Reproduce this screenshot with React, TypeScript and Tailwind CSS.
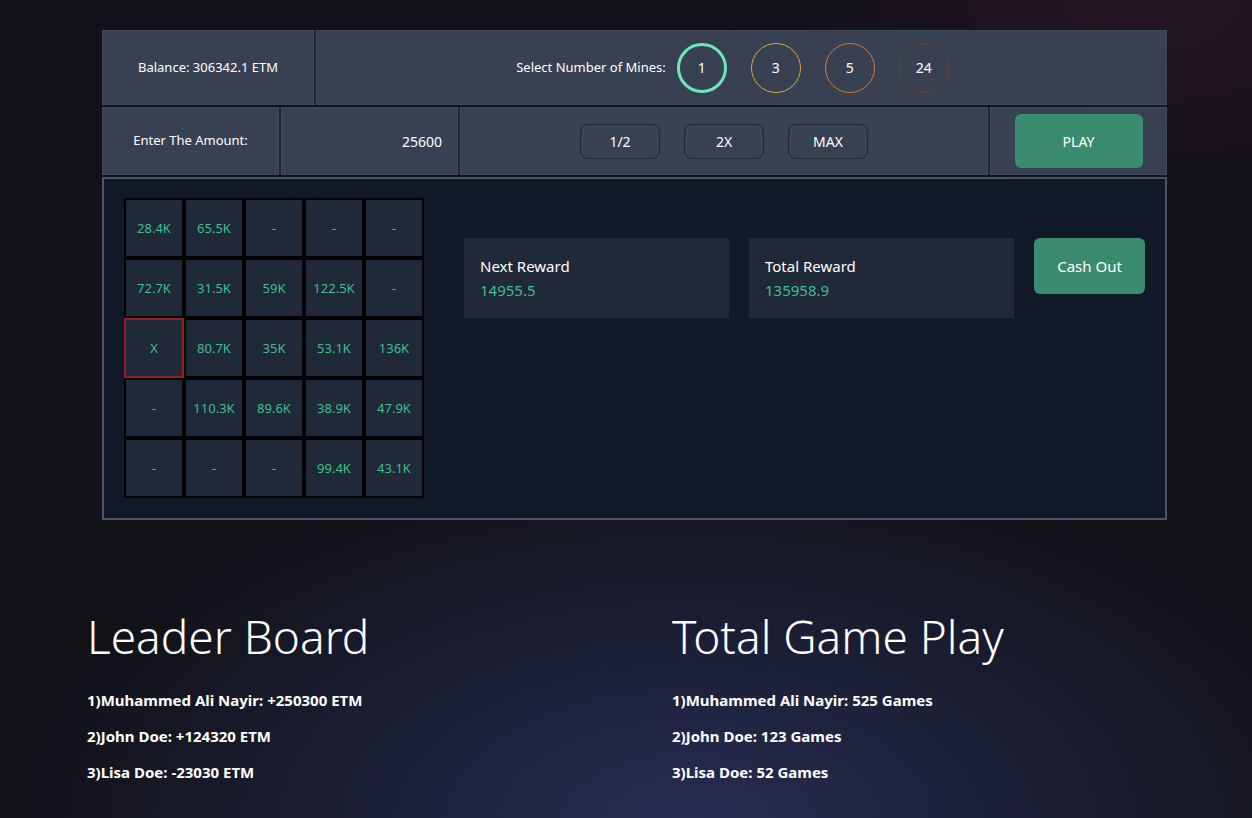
import React from 'react';

const mines = [
  { n: 1, cls: 'border-[3px] border-[#6ee7b7]' },
  { n: 3, cls: 'border border-[#e0a82e]' },
  { n: 5, cls: 'border border-[#d97a26]' },
  { n: 24, cls: 'border border-[#7a3f22]' },
];

const board = [
  ['28.4K', '65.5K', '-', '-', '-'],
  ['72.7K', '31.5K', '59K', '122.5K', '-'],
  ['X', '80.7K', '35K', '53.1K', '136K'],
  ['-', '110.3K', '89.6K', '38.9K', '47.9K'],
  ['-', '-', '-', '99.4K', '43.1K'],
];

const leaders = ['1)Muhammed Ali Nayir: +250300 ETM', '2)John Doe: +124320 ETM', '3)Lisa Doe: -23030 ETM'];
const games = ['1)Muhammed Ali Nayir: 525 Games', '2)John Doe: 123 Games', '3)Lisa Doe: 52 Games'];

const Cell: React.FC<{ className?: string; children?: React.ReactNode }> = ({ className = '', children }) => (
  <div className={`bg-[#374151] border border-[#3f4a5a] flex items-center ${className}`}>{children}</div>
);

export default function App() {
  return (
    <div className="min-h-screen w-full bg-[#111117] bg-[radial-gradient(ellipse_55%_45%_at_55%_100%,#262d52_0%,transparent_100%),radial-gradient(ellipse_35%_30%_at_92%_0%,#23151f_0%,transparent_100%)] text-white font-['Noto_Sans',sans-serif] pt-[30px] pb-[40px]">
      <div className="ml-[102px] w-[1065px] flex flex-col gap-[2px]">
        <div className="flex gap-[2px] h-[75px] bg-[#1f2733]">
          <Cell className="w-[212px] justify-center text-[13px]">Balance: 306342.1 ETM</Cell>
          <Cell className="flex-1 justify-center gap-[11px] pr-[18px]">
            <span className="text-[13px]">Select Number of Mines:</span>
            <div className="flex gap-[24px]">
              {mines.map((m) => (
                <div key={m.n} className={`w-[50px] h-[50px] rounded-full flex items-center justify-center text-[14px] ${m.cls}`}>
                  {m.n}
                </div>
              ))}
            </div>
          </Cell>
        </div>

        <div className="flex gap-[2px] h-[68px] bg-[#1f2733]">
          <Cell className="w-[177px] justify-center text-[13px]">Enter The Amount:</Cell>
          <Cell className="w-[177px] justify-end pr-[15px] text-[14px]">25600</Cell>
          <Cell className="flex-1 justify-center gap-[24px]">
            {['1/2', '2X', 'MAX'].map((b) => (
              <div key={b} className="w-[80px] h-[35px] rounded-lg border border-[#1f2733] flex items-center justify-center text-[14px]">
                {b}
              </div>
            ))}
          </Cell>
          <Cell className="w-[177px] justify-center">
            <div className="w-[128px] h-[54px] rounded-md bg-[#3b8b6f] flex items-center justify-center text-[14px]">PLAY</div>
          </Cell>
        </div>

        <div className="h-[343px] bg-[#111827] border-2 border-[#4b5563] pl-[20px] pt-[19px] flex">
          <div className="grid grid-cols-5 w-[300px] h-[300px]">
            {board.flat().map((v, i) => (
              <div
                key={i}
                className={`w-[60px] h-[60px] border-2 bg-[#1f2937] flex items-center justify-center pt-[2px] text-[13px] text-[#3fbe8e] ${
                  v === 'X' ? 'border-[#9b1c1c]' : 'border-black'
                }`}
              >
                {v}
              </div>
            ))}
          </div>

          <div className="flex gap-[20px] ml-[40px] mt-[40px] items-start">
            <div className="w-[265px] h-[80px] bg-[#1f2937] pl-[16px] pt-[18px]">
              <div className="text-[15px] leading-[20px]">Next Reward</div>
              <div className="text-[15px] leading-[20px] text-[#3fbe8e] mt-[4px]">14955.5</div>
            </div>
            <div className="w-[265px] h-[80px] bg-[#1f2937] pl-[16px] pt-[18px]">
              <div className="text-[15px] leading-[20px]">Total Reward</div>
              <div className="text-[15px] leading-[20px] text-[#3fbe8e] mt-[4px]">135958.9</div>
            </div>
            <div className="w-[111px] h-[56px] rounded-md bg-[#3b8b6f] flex items-center justify-center text-[15px]">Cash Out</div>
          </div>
        </div>
      </div>

      <div className="flex mt-[86px] pl-[87px]">
        <div className="w-[585px]">
          <h1 className="text-[46px] font-light leading-[60px]">Leader Board</h1>
          <div className="mt-[24px] flex flex-col gap-[15px]">
            {leaders.map((l) => (
              <p key={l} className="text-[15px] font-bold leading-[21px]">{l}</p>
            ))}
          </div>
        </div>
        <div>
          <h1 className="text-[46px] font-light leading-[60px]">Total Game Play</h1>
          <div className="mt-[24px] flex flex-col gap-[15px]">
            {games.map((l) => (
              <p key={l} className="text-[15px] font-bold leading-[21px]">{l}</p>
            ))}
          </div>
        </div>
      </div>
    </div>
  );
}
